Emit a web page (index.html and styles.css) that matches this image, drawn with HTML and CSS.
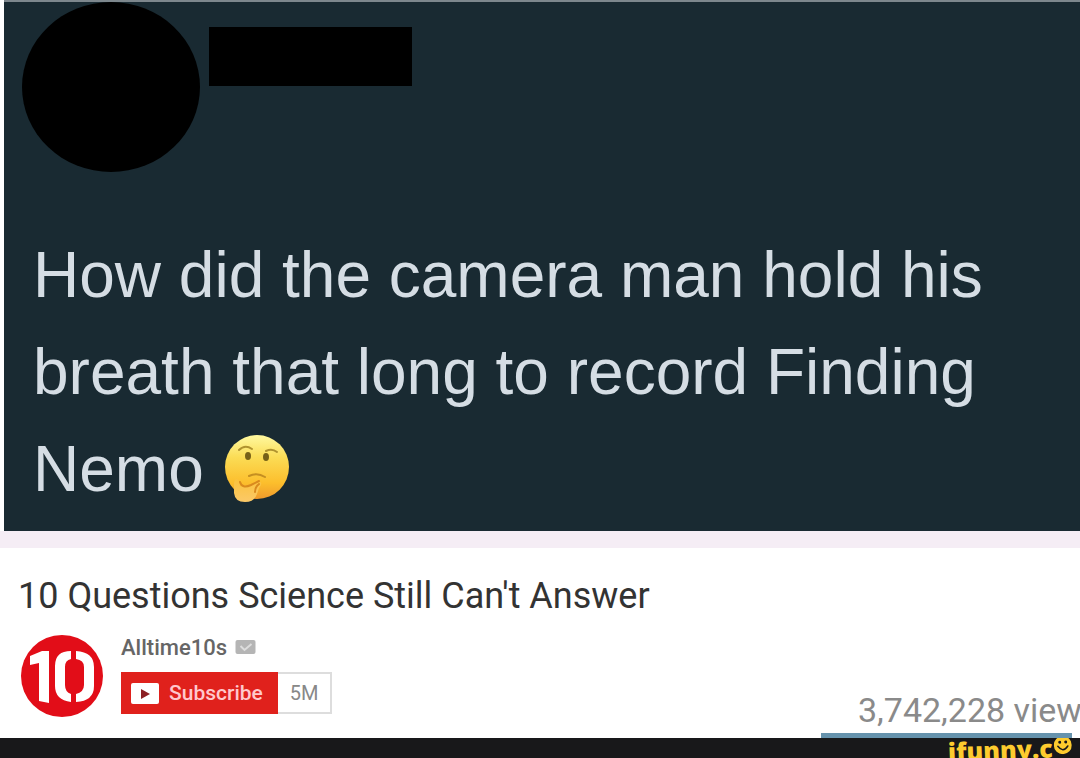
FILE: index.html
```html
<!DOCTYPE html>
<html lang="en">
<head>
<meta charset="utf-8">
<meta name="viewport" content="width=device-width, initial-scale=1">
<title>10 Questions Science Still Can't Answer</title>
<link rel="stylesheet" href="styles.css">
</head>
<body>
<main class="page">
  <article class="post">
    <header class="author">
      <div class="avatar"></div>
      <div class="name-bar"></div>
    </header>
    <p class="question">How did the camera man hold his<br>breath that long to record Finding<br>Nemo
      <svg class="emoji" viewBox="0 0 68 70" role="img" aria-label="Thinking face">
        <defs>
          <linearGradient id="face" x1="0" y1="0" x2="0" y2="1">
            <stop offset="0" stop-color="#fff9a0"/>
            <stop offset=".35" stop-color="#fbdc55"/>
            <stop offset=".75" stop-color="#fcbe2c"/>
            <stop offset="1" stop-color="#ef9a2c"/>
          </linearGradient>
          <linearGradient id="hand" x1="0" y1="0" x2="0" y2="1">
            <stop offset="0" stop-color="#fbc23c"/>
            <stop offset="1" stop-color="#fbc968"/>
          </linearGradient>
        </defs>
        <circle cx="35" cy="34" r="32" fill="url(#face)"/>
        <path d="M17 17q6-6 13-1M44 18q6-3 11 1" fill="none" stroke="#b0932f" stroke-width="2" stroke-linecap="round"/>
        <ellipse cx="26" cy="23" rx="3" ry="4" fill="#766018"/>
        <ellipse cx="44" cy="24" rx="3" ry="4" fill="#766018"/>
        <path d="M27 43q8-4 16 1" fill="none" stroke="#c58f22" stroke-width="2" stroke-linecap="round"/>
        <path d="M15 46q-3 0-3 5v9q1 9 11 9 9 0 12-8l2-6q4-5 1-6-5 0-8 3l-8 2-4-1q0-6-3-7z" fill="url(#hand)"/>
        <path d="M18 49q2 7 11 3l8-4M37 51q-4 3-4 8" fill="none" stroke="#d98a1e" stroke-width="2" stroke-linecap="round"/>
      </svg>
    </p>
  </article>
  <section class="video">
    <h1 class="title">10 Questions Science Still Can't Answer</h1>
    <div class="details">
      <div class="channel">
        <svg class="logo" viewBox="0 0 84 84" role="img" aria-label="10">
          <circle cx="42" cy="42" r="41" fill="#e20d18"/>
          <path d="M10 22l12-5h7v52l-10-2V29l-9 2z" fill="#fff"/>
          <path d="M51 17Q35 17 35 32v20q0 14 16 16v-8q-6-2-6-9V33q0-7 6-8zM56 17q18 1 18 16v19q0 15-18 16v-8q8-2 8-9V33q0-7-8-8z" fill="#fff"/>
        </svg>
        <div class="channel-info">
          <div class="channel-name">
            <a href="#">Alltime10s</a>
            <svg class="verified" viewBox="0 0 20 14" aria-hidden="true">
              <rect width="20" height="14" rx="2" fill="#b5b5b5"/>
              <path d="M5 6l4 4 7-6" fill="none" stroke="#ddd" stroke-width="2"/>
            </svg>
          </div>
          <div class="subscribe-row">
            <button class="subscribe" type="button">
              <svg class="play" viewBox="0 0 28 21" aria-hidden="true">
                <rect width="28" height="21" rx="2" fill="#fff"/>
                <path d="M10 6l9 5-9 5z" fill="#8c2024"/>
              </svg>
              Subscribe
            </button>
            <span class="count">5M</span>
          </div>
        </div>
      </div>
      <div class="views">3,742,228 view</div>
    </div>
  </section>
  <footer class="site-bar">
    <div class="brand">
      <span>ifunny.c</span>
      <svg class="smiley" viewBox="0 0 18 18" aria-hidden="true">
        <circle cx="9" cy="9" r="9" fill="#fdcb2e"/>
        <circle cx="6" cy="6" r="1.5" fill="#18181a"/>
        <circle cx="12" cy="6" r="1.5" fill="#18181a"/>
        <path d="M4 10q5 7 10 0" fill="none" stroke="#18181a" stroke-width="1.5" stroke-linecap="round"/>
      </svg>
    </div>
  </footer>
</main>
</body>
</html>
```
FILE: styles.css
```css
* {
  box-sizing: border-box;
}

body {
  margin: 0;
  background: #fff;
  font-family: Roboto, "Liberation Sans", sans-serif;
}

.page {
  display: flex;
  flex-direction: column;
  min-height: 100vh;
  overflow: hidden;
}

.post {
  margin-left: 4px;
  padding: 0 18px 13px;
  border-top: 2px solid #7d878d;
  background: #192a32;
}

.author {
  display: flex;
  gap: 9px;
}

.avatar {
  width: 178px;
  height: 170px;
  border-radius: 50%;
  background: #000;
}

.name-bar {
  width: 203px;
  height: 59px;
  margin-top: 25px;
  background: #000;
}

.question {
  margin: 55px 0 0 11px;
  color: #d5dde4;
  font-family: "Liberation Sans", Arial, sans-serif;
  font-size: 64px;
  line-height: 97px;
  white-space: nowrap;
}

.emoji {
  width: 68px;
  height: 70px;
  vertical-align: -12px;
}

.video {
  flex: 1;
  display: flex;
  flex-direction: column;
  border-top: 17px solid #f5edf5;
  padding-left: 18px;
}

.title {
  margin: 28px 0 0;
  color: #333;
  font-size: 36px;
  font-weight: 400;
  line-height: 40px;
}

.details {
  flex: 1;
  display: flex;
  justify-content: space-between;
}

.channel {
  display: flex;
  gap: 17px;
  padding: 18px 0 0 2px;
}

.logo {
  width: 84px;
  height: 84px;
}

.channel-name {
  display: flex;
  align-items: center;
  gap: 8px;
  height: 26px;
}

.channel-name a {
  color: #666;
  font-size: 22px;
  font-weight: 500;
  text-decoration: none;
}

.verified {
  width: 21px;
  height: 14px;
}

.subscribe-row {
  display: flex;
  height: 42px;
  margin-top: 12px;
}

.subscribe {
  display: flex;
  align-items: center;
  gap: 10px;
  width: 157px;
  padding: 0 10px;
  border: 0;
  background: #e0211c;
  color: #ffc8cc;
  font: 500 21px Roboto, sans-serif;
}

.play {
  flex: none;
  width: 28px;
  height: 21px;
}

.count {
  display: flex;
  align-items: center;
  justify-content: center;
  width: 54px;
  border: 2px solid #ddd;
  border-left: 0;
  color: #888;
  font-size: 20px;
}

.views {
  align-self: flex-end;
  width: 251px;
  margin-right: 8px;
  padding-left: 37px;
  color: #8a8a8a;
  font-size: 34px;
  line-height: 46px;
  white-space: nowrap;
  border-bottom: 5px solid #6693ad;
}

.site-bar {
  display: flex;
  justify-content: flex-end;
  height: 20px;
  padding-right: 8px;
  background: #18181a;
  overflow: hidden;
}

.brand {
  display: flex;
  align-items: flex-start;
  gap: 1px;
  height: 28px;
  color: #fdcb2e;
  font: 800 25px/22px "Open Sans", sans-serif;
  transform: rotate(-2deg);
}

.smiley {
  width: 18px;
  height: 18px;
}
```
